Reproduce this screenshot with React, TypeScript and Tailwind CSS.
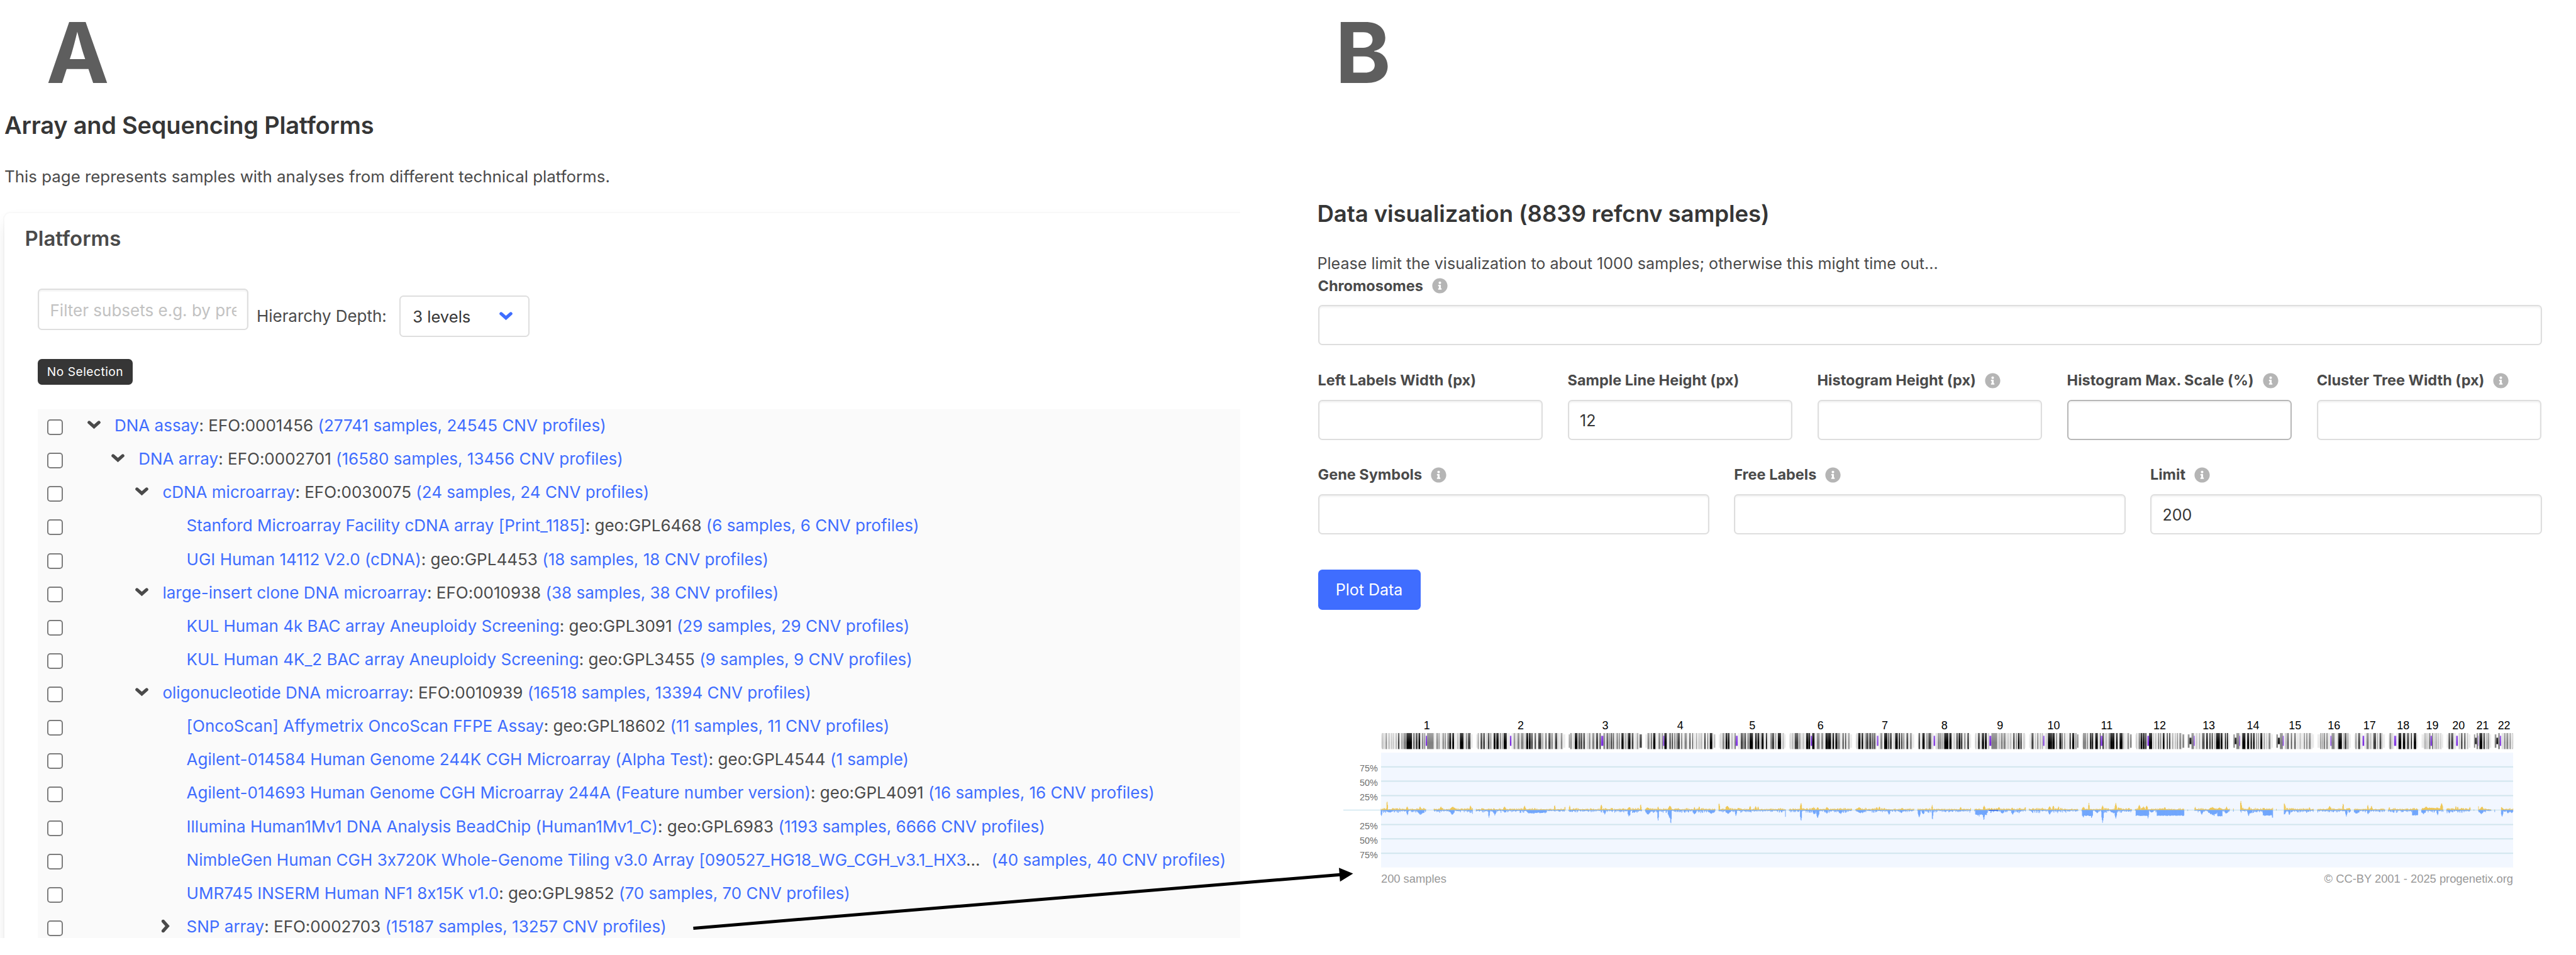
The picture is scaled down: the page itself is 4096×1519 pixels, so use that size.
import type { ReactNode } from "react";
import { FaInfoCircle } from "react-icons/fa";

/* ---------- Platform tree ---------- */

type Row = {
  level: number;
  name: string;
  code?: string;
  count: string;
  toggle?: "open" | "closed";
};

const ROWS: Row[] = [
  { level: 0, toggle: "open", name: "DNA assay", code: "EFO:0001456", count: "(27741 samples, 24545 CNV profiles)" },
  { level: 1, toggle: "open", name: "DNA array", code: "EFO:0002701", count: "(16580 samples, 13456 CNV profiles)" },
  { level: 2, toggle: "open", name: "cDNA microarray", code: "EFO:0030075", count: "(24 samples, 24 CNV profiles)" },
  { level: 3, name: "Stanford Microarray Facility cDNA array [Print_1185]", code: "geo:GPL6468", count: "(6 samples, 6 CNV profiles)" },
  { level: 3, name: "UGI Human 14112 V2.0 (cDNA)", code: "geo:GPL4453", count: "(18 samples, 18 CNV profiles)" },
  { level: 2, toggle: "open", name: "large-insert clone DNA microarray", code: "EFO:0010938", count: "(38 samples, 38 CNV profiles)" },
  { level: 3, name: "KUL Human 4k BAC array Aneuploidy Screening", code: "geo:GPL3091", count: "(29 samples, 29 CNV profiles)" },
  { level: 3, name: "KUL Human 4K_2 BAC array Aneuploidy Screening", code: "geo:GPL3455", count: "(9 samples, 9 CNV profiles)" },
  { level: 2, toggle: "open", name: "oligonucleotide DNA microarray", code: "EFO:0010939", count: "(16518 samples, 13394 CNV profiles)" },
  { level: 3, name: "[OncoScan] Affymetrix OncoScan FFPE Assay", code: "geo:GPL18602", count: "(11 samples, 11 CNV profiles)" },
  { level: 3, name: "Agilent-014584 Human Genome 244K CGH Microarray (Alpha Test)", code: "geo:GPL4544", count: "(1 sample)" },
  { level: 3, name: "Agilent-014693 Human Genome CGH Microarray 244A (Feature number version)", code: "geo:GPL4091", count: "(16 samples, 16 CNV profiles)" },
  { level: 3, name: "Illumina Human1Mv1 DNA Analysis BeadChip (Human1Mv1_C)", code: "geo:GPL6983", count: "(1193 samples, 6666 CNV profiles)" },
  { level: 3, name: "NimbleGen Human CGH 3x720K Whole-Genome Tiling v3.0 Array [090527_HG18_WG_CGH_v3.1_HX3", count: "(40 samples, 40 CNV profiles)" },
  { level: 3, name: "UMR745 INSERM Human NF1 8x15K v1.0", code: "geo:GPL9852", count: "(70 samples, 70 CNV profiles)" },
  { level: 3, toggle: "closed", name: "SNP array", code: "EFO:0002703", count: "(15187 samples, 13257 CNV profiles)" },
];

const INDENT = ["w-[77.5px]", "w-[115.7px]", "w-[153.9px]", "w-[192.1px]"];

function Chevron({ className }: { className: string }) {
  return (
    <svg viewBox="0 0 21 14" className={className} fill="none" stroke="currentColor" strokeWidth="5.2" strokeLinecap="round">
      <path d="M2.8 2.9 L10.5 9.8 L18.2 2.9" />
    </svg>
  );
}

function TreeRow({ row }: { row: Row }) {
  return (
    <li className="flex h-[53.13px] items-center whitespace-nowrap text-[26px] leading-[40px]">
      <span className="mt-[7px] ml-[15px] size-[25px] shrink-0 rounded-[5px] border-2 border-[#7c7c7c] bg-white" />
      <span className={`${INDENT[row.level]} flex h-full shrink-0 items-center justify-end pr-[18px] text-[#4a4a4a]`}>
        {row.toggle === "open" && <Chevron className="h-[14px] w-[21px]" />}
        {row.toggle === "closed" && <Chevron className="h-[14px] w-[21px] -rotate-90" />}
      </span>
      <span className="pt-[2px] pl-[4.5px] text-[#4a4a4a]">
        <span className="text-[#3f6dff]">{row.name}</span>
        {row.code ? `: ${row.code} ` : "..."}
        <span className={row.code ? "text-[#3f6dff]" : "pl-[18px] text-[#3f6dff]"}>{row.count}</span>
      </span>
    </li>
  );
}

/* ---------- Form ---------- */

function Field({ label, info, value, active }: { label: string; info?: boolean; value?: string; active?: boolean }) {
  return (
    <label className="flex flex-1 flex-col">
      <span className="flex h-9 items-center text-[23.5px] leading-9 font-bold text-[#4a4a4a]">
        {label}
        {info && <FaInfoCircle className="ml-[14px] size-[25px] text-[#b5b5b5]" />}
      </span>
      <input
        readOnly
        value={value ?? ""}
        className={`mt-[12.5px] h-[64px] w-full rounded-[6.5px] border-2 bg-white px-[17.5px] pt-[2px] text-[25px] text-[#363636] shadow-[inset_0_2px_3px_rgba(10,10,10,0.06)] outline-none ${active ? "border-[#b8b8b8]" : "border-[#dedede]"}`}
      />
    </label>
  );
}

/* ---------- Chart ---------- */

/* Cytobands per chromosome: end position in Mb followed by the stain.
   n negative, a-d increasing stain, v variable, s stalk, x centromere. */
const BANDS = [
  "2.3n 5.3a 7.1n 9.1a 12.5n 15.9b 20.1n 23.6a 27.6n 29.9a 32.3n 34.3a 39.6n 43.7a 46.3n 50.2c 55.6n 58.5b 60.8n 68.5b 69.3n 84.4d 87.9n 91.5c 94.3n 99.3c 101.8n 106.7d 111.2n 115.5b 117.2n 120.4b 121.7n 125.1x 143.2v 147.5n 150.6n 155.1b 156.6n 159.1b 165.5n 167.2n 170.9b 173n 176.1b 180.3n 185.8b 190.8d 193.8n 198.7d 207.1n 211.3a 214.4n 223.9d 224.4n 226.8a 230.5n 234.6b 236.4n 243.5c 249n",
  "4.4n 6.9b 12n 16.5c 19n 23.8c 27.7n 29.8a 31.8n 36.3c 38.3n 41.5b 47.5n 52.6d 54.7n 61d 63.9n 68.4b 71.3n 73.3b 74.8n 83.1d 91.8n 96x 102.1n 105.3b 106.7n 108.7a 112.2n 118.1b 121.6n 129.1b 131.7n 134.3a 136.1n 141.5d 143.4n 148.1d 149.3n 154c 159n 162.9c 168.9n 177.1c 179.7n 182.1b 188.5n 191.1c 196.6n 202.5c 204.1n 208.2b 214.5n 220.7c 224.3n 225.2a 230.1n 234.7b 236.4n 242.2n",
  "2.8b 4n 8.1b 11.6n 13.2a 16.3n 23.8d 26.3n 30.8c 32n 36.4c 39.3n 43.6c 44.1n 44.2b 50.6n 52.3a 54.4n 58.6b 63.8n 69.7b 74.1n 79.8c 83.5n 87.1c 87.8n 94x 98.6v 100.3n 101.2a 102.8n 106.5c 108.2n 111.6b 113.7n 117.6c 119.3n 122.2c 124.1n 126.1a 129.5n 134b 136n 139b 143.1n 149.2d 152.3n 155.3b 157.3n 159.3b 161n 167.9d 171.2n 176c 179.3n 183n 184.8a 186.3n 188.2c 192.6n 198.3c",
  "4.5n 6n 11.3b 15n 17.8c 21.3n 27.7d 35.8n 41.2b 44.6n 48.2b 50x 51.8x 58.5d 65.5n 69.4c 72n 75.3c 78n 81.5b 83.2n 86b 87.1n 93.8c 97.9n 100.1c 106.7n 113.2b 119.9n 123c 127.9n 130.1c 138.5n 140.6b 145.9n 147.5b 150.2n 154.6a 160.8n 163.6d 169.2n 171c 175.4n 182.3d 186.2n 190.2a",
  "4.4n 6.3a 9.9n 15b 18.4n 23.3d 24.6n 28.9d 33.8n 38.4a 42.5n 46.1b 48.8x 51.4x 59.6n 63.6c 63.9n 67.4c 69.1n 74c 77.6n 82.1b 83.5n 93d 98.9n 103.4d 105.1n 110.2d 112.2n 113.8b 116n 122.1d 128n 131.2d 136.9n 140.1n 145.1b 150.4c 153.3n 156.3b 160.5n 169d 173.3n 177.1a 181.5n",
  "2.3n 4.2a 7.1n 10.6a 11.6n 13.4a 15.2n 25.2c 27.1n 30.5b 32.1n 33.5a 36.6n 40.5a 46.2n 51.8d 52.3n 57.2d 58.7n 59.8x 62.6x 69.2d 75.2n 83.2b 87.3n 92.5b 98.9n 104.8d 105.1n 114.2d 117.9n 122.3d 125.8n 130d 135.2b 138.3b 145.1n 148.5c 152.1n 155.2c 160.6n 164.1b 170.8n",
  "2.8n 4.5a 7.2n 13.7d 16.5n 20.9d 25.5n 27.9b 28.8n 34.9c 37.1n 43.3c 45.4n 49c 50.5n 53.9c 58.1n 60.1x 62.1x 67.5n 72.7b 77.9n 86.7d 88.5n 91.5c 93.3n 98.4c 104.2n 104.9b 107.8n 115d 117.7n 121.4d 124.1n 127.5c 129.6n 132.9b 138.5n 143.4c 148.2n 152.8b 155.2n 159.3n",
  "2.3n 6.3c 12.7n 19.2d 23.5n 27.5b 29n 36.7c 38.5n 39.9a 43.2n 45.2x 47.2x 51.3n 51.7c 54.6n 60.6b 61.3n 65.1b 67.1n 69.6b 72n 74.6d 83.5d 85.9n 92.3d 97.9n 100.5a 105.1n 109.5c 111.1n 116.7d 118.3n 121.5d 126.3n 130.4b 135.4n 139d 145.1n",
  "2.2n 4.6a 9n 14.2c 16.6n 18.5a 19.9n 25.6d 28n 33.2d 36.3n 37.9a 39n 40a 43x 45.5x 61.5v 65n 69.3a 71.3n 76.6b 78.5n 84.3b 87.8n 89.2a 91.2n 93.5a 96.5n 99.8a 105.4n 108.5d 112.1n 114.9b 117.7n 122.5d 124.8n 127.8d 133.1n 135.9a 138.4n",
  "3n 3.8a 6.6n 12.2c 17.3n 18.3b 22.6n 24.6c 29.6n 31.3b 34.4n 38a 39.8x 41.6x 45.5n 48.1a 51.1n 59.7d 63.2d 63.6n 69.6d 72.9n 76.4b 82.4n 86.7d 87.7n 91.1c 95.3n 98b 103.9n 104.2a 110.2n 113.3d 117.3n 123.1d 125.7n 128.8b 130.5n 133.8b",
  "2.8n 11.7b 13.8n 16.9b 22n 26.2d 27.2n 31d 36.4n 43.4d 48.8n 51c 53.4x 55.8x 60.1c 63.6n 68.7a 72.7n 77.4b 83.4d 88.6d 93n 97.4d 102.3n 103d 110.6d 112.7n 114.6b 121.3n 124n 128b 130.9n 135.1b",
  "3.2n 5.3a 10n 12.6c 14.6n 19.8d 21.1n 26.3d 27.6n 30.5d 33.2n 35.5x 37.8x 46d 48.7n 51.1a 54.5n 57.7a 62.7n 64.7c 67.3n 71.1b 75.3n 79.9d 86.3n 88.6d 92.2n 95.8c 101.2n 103.5b 108.6n 111.3a 113.9n 116.4b 120.3n 125.4b 128.7n 133.3b",
  "4.6v 10.1s 16.5v 17.7x 18.9x 22.6n 24.9a 27.2n 28.3a 31.6n 33.4b 39.5n 44.6c 45.2n 46.7b 50.3n 54.7d 59n 61.8d 65.2n 68.1d 72.8n 74.9b 77n 87.5d 89.4n 94.4d 97.5n 98.7a 101.1n 104.2d 106.4n 109.6d 114.4n",
  "3.6v 8s 16.1v 17.2x 18.2x 24.1n 32.9d 37.4n 43d 46.7n 50.4d 53.6n 57.6d 61.6n 64.3b 67.4n 69.8b 73.3n 78.8d 83.1n 84.4d 89.3n 91.4a 95.8n 100.9b 103n 107n",
  "4.2v 9.7s 17.5v 19x 20.5x 25.5n 27.8b 30n 33.4c 39.8n 42.5c 43.3n 44.5a 49.2n 52.6c 58.8n 59a 63.4n 66.9a 72.4n 75n 78b 81.4n 84.7b 88.5n 93.8b 98n 102n",
  "7.8n 10.3b 12.5n 14.7b 16.7n 21.2b 24.2n 28.5b 35.3n 36.8x 38.4x 47v 52.6n 56n 57.3c 66.6d 70.8n 72.8b 74.1n 79.2c 81.6n 84.1b 87n 90.3n",
  "3.4n 6.5b 10.8n 16.1c 22.7n 25.1x 27.4x 33.5n 39.8b 42.8n 46.8a 49.3n 52.1n 59.5c 63n 64.6b 69n 72.9c 76.8a 83.3n",
  "2.9n 7.2b 8.5n 10.9a 15.4n 18.5x 21.5x 27.5n 35.1d 39.5n 45.9d 50.7n 56.2c 61.3n 64d 69.1n 75.4d 80.4n",
  "6.9n 12.6a 13.8n 16.1a 19.9n 24.2v 26.2x 28.1x 31.9v 35.1n 37.8a 38.2n 42.9a 44.7n 47.5a 50.9n 53.1a 55.8n 58.6n",
  "5.1n 9.2c 12n 17.9c 21.3n 22.3a 25.7n 28.1x 30.4x 33.5n 35.8a 39n 43.1c 47.8n 51.2c 56.4n 57.8b 64.4n",
  "3.1v 7s 10.9v 12x 13n 15n 22.6d 25.5n 30.2c 34.4n 36.4b 38.3n 41.2b 46.7n",
  "4.3v 9.4s 13.7v 15x 17.4x 21.7n 23.1a 25.5n 29.2b 31.8n 37.2b 40.6n 43.8b 48.1n 49.1b 50.8n",
];

const PX_PER_MB = 0.711;
const GAP = 6.93;
const START = 2669.9;
const END = 4859;
const BASE = 1568;

const BAND_FILL: Record<string, string> = {
  n: "#e9e9e9",
  a: "#b8b8b8",
  b: "#828282",
  c: "#3c3c3c",
  d: "#000000",
  v: "#808080",
  s: "#161616",
  x: "#7a2be2",
};

type Band = { x: number; w: number; y: number; h: number; fill: string };

const bands: Band[] = [];
const arms: { from: number; to: number; holeFrom: number; holeTo: number }[] = [];
const LABEL_X: number[] = [];

let cursor = START;
BANDS.forEach((spec, chr) => {
  const items = spec.split(" ").map((t) => ({ end: parseFloat(t), stain: t.slice(-1) }));
  let from = 0;
  let holeFrom = 0;
  let holeTo = 0;
  items.forEach((b, i) => {
    const edge = i === 0 || i === items.length - 1;
    let y = 1419;
    let h = 31;
    if (edge) {
      y = 1421.5;
      h = 26;
    }
    if (b.stain === "x") {
      y = 1424.3;
      h = 19.5;
    }
    if (b.stain === "s") {
      y = 1428;
      h = 12.5;
    }
    if (b.stain === "x") {
      const acro = items[0].stain === "v";
      if (holeTo === 0) holeFrom = acro ? 0 : from;
      holeTo = b.end;
      if (chr === 0) holeTo = 143;
    }
    bands.push({ x: cursor + from * PX_PER_MB, w: (b.end - from) * PX_PER_MB + 0.15, y, h, fill: BAND_FILL[b.stain] });
    from = b.end;
  });
  const acroOrFirst = chr === 0 || items[0].stain === "v";
  arms.push({
    from: cursor,
    to: cursor + from * PX_PER_MB,
    holeFrom: acroOrFirst ? cursor + holeFrom * PX_PER_MB : 0,
    holeTo: acroOrFirst ? cursor + holeTo * PX_PER_MB : 0,
  });
  LABEL_X.push(cursor + (from * PX_PER_MB) / 2);
  cursor += from * PX_PER_MB + GAP;
});

/* Peaks: centre, width, height in chart pixels. */
const GAINS: [number, number, number][] = [
  [2681.6, 1, 18.5], [2720.4, 2, 7], [2745.4, 2, 7], [2785.7, 2, 7], [2808.7, 9, 7], [2842.9, 2, 9], [2847.4, 1, 6],
  [2908.7, 3, 7], [2947.4, 2, 8.5], [3005.6, 1, 10], [3025.5, 1, 7], [3034.7, 1, 9], [3095.9, 2, 11], [3150, 4, 7],
  [3171.9, 1, 12], [3185.2, 7, 6], [3205.6, 1, 7], [3228.6, 5, 9.5], [3276, 1, 6], [3285.2, 1, 7.5], [3323.5, 1.5, 14],
  [3339.3, 5, 11], [3383.7, 2, 8], [3394.3, 2, 7.5], [3399, 1, 7], [3482, 2, 14.5], [3506, 4, 6.5], [3514.2, 3, 5.5],
  [3532, 3, 6], [3594.3, 8, 6], [3628.5, 2, 6], [3633.6, 2, 7], [3735.6, 1, 10], [3790.7, 2, 6], [3836.1, 3, 8.5],
  [3864.7, 3, 6], [3890.2, 2, 5], [3915.7, 2, 6], [3962.7, 3, 7.5], [3969.8, 2, 9], [3980, 1, 7.5], [4028, 4, 7],
  [4038.7, 1, 14], [4065.2, 2, 9], [4090.7, 2, 14], [4095.8, 2, 5.5], [4136.1, 3, 10], [4143.8, 5, 8], [4150.4, 3, 8.5],
  [4185.5, 2, 6], [4244.2, 1, 6], [4277.3, 11, 6], [4291.6, 9, 5], [4304.9, 1, 7], [4332.4, 2, 18], [4348.8, 2, 7],
  [4394.7, 2, 5.5], [4416.6, 3, 13.5], [4465.1, 1, 5.5], [4504.4, 4, 8.5], [4530.4, 1, 13.5], [4577.9, 1, 10.5],
  [4585, 1, 9], [4619.7, 1, 6], [4690.6, 6, 8], [4697, 6, 6], [4704, 8, 5], [4720.7, 3, 14], [4712, 6, 6],
  [4748.3, 1, 8], [4751.8, 1, 7], [4775.3, 1, 6], [4791.1, 2, 10], [4798.8, 4, 8], [4836, 6, 7],
];

const LOSSES: [number, number, number][] = [
  [2670.6, 2, 11.5], [2686.7, 10, 5.5], [2721, 2, 10], [2746.4, 10, 10], [2807.7, 7, 10], [2847.4, 1, 10],
  [2878.6, 1.5, 15], [2890, 4, 11], [2909.2, 3, 5], [2964.8, 26, 7.5], [3102.6, 2, 8.5], [3149.5, 4, 14.5],
  [3159.7, 3, 5.5], [3186.2, 8, 10.5], [3205.6, 1.5, 21], [3227.6, 5, 16], [3230.2, 1.5, 28.5], [3276, 6, 9],
  [3309.2, 12, 7.5], [3340.8, 8, 9], [3356.1, 1.5, 12], [3452.4, 1, 16.5], [3482, 2, 22], [3507.6, 5, 10],
  [3514.2, 4, 16.5], [3532, 3, 7], [3559, 4, 8.5], [3597, 12, 6.5], [3652.4, 3, 9], [3676, 3, 6], [3710.6, 3, 14.5],
  [3718.3, 4, 10], [3736.1, 1, 20.5], [3826, 12, 13], [3835.6, 2, 20.5], [3836, 12, 12], [3871.3, 5, 8],
  [3891.2, 4, 10], [3962.7, 3, 9], [4028, 3, 15], [4043.8, 2, 16.5], [4055, 4, 7], [4065.2, 2.5, 25], [4086, 9, 7],
  [4090.7, 3, 16.5], [4153, 2, 16.5], [4160, 6, 6], [4256.9, 3, 9], [4279, 18, 10.5], [4281, 4, 13], [4304.4, 6, 8.5],
  [4349.8, 8, 8.5], [4347.5, 2, 12], [4393.7, 2, 16.5], [4416.6, 5, 9.5], [4426.3, 2, 10], [4536.5, 2, 12.5],
  [4556.4, 9, 8], [4578.4, 2, 8.5], [4670, 2, 11.5], [4685.5, 9, 8.5], [4713, 2, 10], [4735.5, 2, 6.5],
  [4797.8, 7, 8.5], [4837.6, 2.5, 13], [4848.8, 3, 6.5], [4856.4, 3, 6],
];

/* Flat segments: from, to, height. */
const GAIN_BLOCKS: [number, number, number][] = [[4683, 4723, 3]];
const LOSS_BLOCKS: [number, number, number][] = [
  [2953, 2990, 4.5], [3818.8, 3841.6, 8], [4025.9, 4046.3, 10], [4129, 4154.5, 10], [4170.2, 4223.3, 10],
  [4287, 4297, 11], [4375.3, 4395.7, 9.5], [4664, 4675.3, 9],
];

function noise(n: number) {
  const v = Math.sin(n * 12.9898) * 43758.5453;
  return v - Math.floor(v);
}

function peakAt(x: number, peaks: [number, number, number][]) {
  let best = 0;
  for (const [c, w, h] of peaks) {
    const d = Math.abs(x - c);
    const reach = w / 2 + 0.7;
    if (d < reach) best = Math.max(best, h * (1 - 0.5 * (d / reach)) * (w > 3 ? 0.7 + 0.3 * noise(x * 3.1) : 1));
  }
  return best;
}

function blockAt(x: number, blocks: [number, number, number][]) {
  for (const [a, b, h] of blocks) if (x >= a && x <= b) return h + 1.5 * noise(Math.floor(x / 2));
  return 0;
}

let gainPath = "";
let lossPath = "";
for (const arm of arms) {
  for (let x = arm.from; x < Math.min(arm.to, END); x += 0.8) {
    if (arm.holeTo && x > arm.holeFrom && x < arm.holeTo) continue;
    const swell = 0.4 + 0.6 * noise(Math.floor(x / 9) * 1.7);
    const up = Math.max(peakAt(x, GAINS), blockAt(x, GAIN_BLOCKS), 1 + 3.6 * swell * Math.pow(noise(x * 1.3), 1.8));
    const down = Math.max(peakAt(x, LOSSES), blockAt(x, LOSS_BLOCKS), 0.8 + 5.5 * swell * Math.pow(noise(x * 2.7 + 5), 2.2));
    gainPath += `M${x.toFixed(1)} ${BASE}v-${up.toFixed(1)}`;
    lossPath += `M${x.toFixed(1)} ${BASE}v${down.toFixed(1)}`;
  }
}

const GRID: [number, string][] = [
  [1484.4, "75%"], [1512.2, "50%"], [1540, "25%"], [1595.9, "25%"], [1623.7, "50%"], [1651.6, "75%"],
];

function CnvChart() {
  return (
    <svg viewBox="2597 1385 2268 335" className="mt-[168.4px] ml-[40px] h-[275.5px] w-[1865px] shrink-0 font-['Liberation_Sans',sans-serif]">
      <defs>
        <linearGradient id="sheen" x1="0" y1="0" x2="0" y2="1">
          <stop offset="0" stopColor="#fff" stopOpacity="0.28" />
          <stop offset="0.6" stopColor="#fff" stopOpacity="0" />
          <stop offset="1" stopColor="#fff" stopOpacity="0.04" />
        </linearGradient>
      </defs>
      {LABEL_X.map((x, i) => (
        <text key={i} x={x} y="1412.2" fontSize="21.8" textAnchor="middle" fill="#000">
          {i + 1}
        </text>
      ))}
      {bands.map((b, i) => (
        <rect key={i} x={b.x} y={b.y} width={b.w} height={b.h} fill={b.fill} />
      ))}
      <rect x={START} y="1419" width={END - START} height="31" fill="url(#sheen)" />
      <rect x={START} y="1457" width={END - START} height="222" fill="#f2f7ff" />
      {GRID.map(([y, label], i) => (
        <g key={i}>
          <path d={`M${START} ${y}H${END}`} stroke="#d1e6ee" strokeWidth="2.4" />
          <text x="2663.5" y={y + 9} fontSize="17.5" textAnchor="end" fill="#707070">
            {label}
          </text>
        </g>
      ))}
      <path d={`M2597 ${BASE}H${END}`} stroke="#cfe6f0" strokeWidth="2" />
      <path d={gainPath} stroke="#efc03c" strokeWidth="1.05" fill="none" />
      <path d={lossPath} stroke="#5f9bfd" strokeWidth="1.05" fill="none" />
      <path d="M3845.5 1568.4H3863" stroke="#2a55d8" strokeWidth="1.4" />
      <text x={START} y="1708" fontSize="22.3" fill="#999">
        200 samples
      </text>
      <text x={END} y="1708" fontSize="22.3" textAnchor="end" fill="#999">
        © CC-BY 2001 - 2025 progenetix.org
      </text>
    </svg>
  );
}

/* ---------- Page ---------- */

function PanelLetter({ children, className }: { children: ReactNode; className: string }) {
  return <div className={`h-[133px] text-[134px] leading-[133px] font-bold text-[#5e5e5e] ${className}`}>{children}</div>;
}

export default function App() {
  return (
    <div className="relative flex h-[1519px] w-[4096px] gap-[124px] overflow-hidden bg-white font-[Inter,sans-serif] text-[#4a4a4a] [font-feature-settings:'calt'_0]">
      <section className="flex h-[1492px] w-[1971.5px] shrink-0 flex-col overflow-hidden pt-[17px]">
        <PanelLetter className="ml-[73.5px]">A</PanelLetter>
        <h1 className="mt-[25px] ml-[7px] text-[38px] leading-[48px] font-semibold tracking-[-0.22px] text-[#363636]">
          Array and Sequencing Platforms
        </h1>
        <p className="mt-[37.6px] ml-[7px] text-[25.87px] leading-[40px]">
          This page represents samples with analyses from different technical platforms.
        </p>

        <div className="mt-[38.4px] ml-[6.5px] h-[1300px] w-[2100px] shrink-0 rounded-[9px] bg-white pt-[20.5px] shadow-[0_13px_26px_-3px_rgba(10,10,10,0.1),0_0_0_2px_rgba(10,10,10,0.02)]">
          <h2 className="ml-[33px] text-[33px] leading-[40px] font-semibold">Platforms</h2>
          <div className="mt-[60px] ml-[53.5px] flex h-[76px] items-start text-[26px] leading-[40px]">
            <input
              readOnly
              placeholder="Filter subsets e.g. by prefix"
              className="h-[66px] w-[335px] rounded-[6.5px] border-2 border-[#dedede] bg-white px-[17.5px] pt-[2px] shadow-[inset_0_2px_3px_rgba(10,10,10,0.06)] outline-none placeholder:text-[#c2c2c2]"
            />
            <span className="mt-[24px] ml-[13px] tracking-[-0.05px]">Hierarchy Depth:</span>
            <button className="mt-[10.6px] ml-[20.5px] flex h-[66px] w-[206.5px] items-center justify-between rounded-[6.5px] border-2 border-[#dedede] pr-[25px] pl-[19px] text-[25.6px] text-[#363636]">
              <span className="pt-px">3 levels</span>
              <Chevron className="h-[14px] w-[21px] text-[#3f6dff]" />
            </button>
          </div>
          <span className="mt-[36px] ml-[53.5px] flex h-[40.5px] w-[151px] items-center justify-center rounded-[6.5px] bg-[#363636] text-[19.2px] tracking-[0.5px] text-white">
            No Selection
          </span>
          <ul className="mt-[39px] ml-[53.5px] h-[841px] overflow-hidden bg-[#fafafa]">
            <li className="-mt-[1.5px]">
              <ul>
                {ROWS.map((row) => (
                  <TreeRow key={row.name} row={row} />
                ))}
              </ul>
            </li>
          </ul>
        </div>
      </section>

      <section className="flex h-full w-[1946px] shrink-0 flex-col pt-[17px]">
        <PanelLetter className="ml-[27.5px]">B</PanelLetter>
        <h1 className="mt-[166px] -ml-px text-[36.6px] leading-[48px] font-semibold tracking-[-0.1px] text-[#363636]">
          Data visualization (8839 refcnv samples)
        </h1>
        <p className="mt-[36.6px] -ml-px text-[25.1px] leading-9">
          Please limit the visualization to about 1000 samples; otherwise this might time out...
        </p>
        <div className="flex">
          <Field label="Chromosomes" info />
        </div>
        <div className="mt-[38px] flex gap-[39.2px]">
          <Field label="Left Labels Width (px)" />
          <Field label="Sample Line Height (px)" value="12" />
          <Field label="Histogram Height (px)" info />
          <Field label="Histogram Max. Scale (%)" info active />
          <Field label="Cluster Tree Width (px)" info />
        </div>
        <div className="mt-[37.7px] flex gap-[39.2px]">
          <Field label="Gene Symbols" info />
          <Field label="Free Labels" info />
          <Field label="Limit" info value="200" />
        </div>
        <button className="mt-[56px] h-[64px] w-[163px] shrink-0 rounded-[6.5px] bg-[#3f6dff] pt-px text-[25px] text-white">
          Plot Data
        </button>
        <CnvChart />
      </section>

      <svg viewBox="1095 1370 1065 115" className="absolute top-[1370px] left-[1095px] h-[115px] w-[1065px]">
        <path d="M1102.4 1476.4L2134 1391" stroke="#000" strokeWidth="5" />
        <path d="M2129 1380.2L2151.5 1389.6L2130.8 1402.2Z" fill="#000" />
      </svg>
    </div>
  );
}
